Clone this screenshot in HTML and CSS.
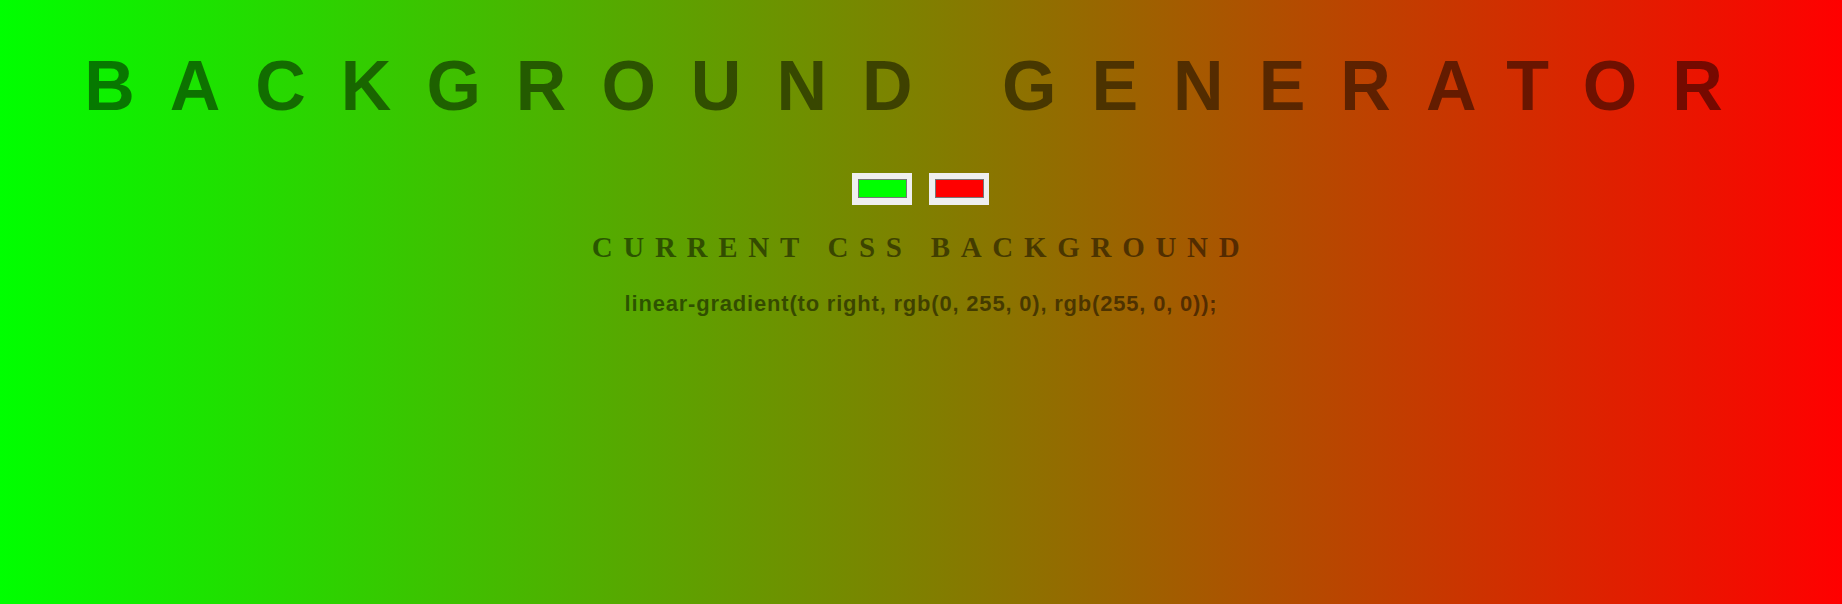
FILE: index.html
```html
<!DOCTYPE html>
<html lang="en">
<head>
<meta charset="utf-8">
<title>Background Generator</title>
<link rel="stylesheet" href="styles.css">
</head>
<body class="page">
  <h1 class="title">Background Generator</h1>
  <div class="pickers">
    <input class="picker" type="color" name="color1" value="#00ff00">
    <input class="picker" type="color" name="color2" value="#ff0000">
  </div>
  <h3 class="subtitle">Current CSS Background</h3>
  <h3 class="css-value">linear-gradient(to right, rgb(0, 255, 0), rgb(255, 0, 0));</h3>
</body>
</html>
```

FILE: styles.css
```css
html {
  height: 100%;
}

.page {
  margin: 0;
  min-height: 100vh;
  display: flex;
  flex-direction: column;
  align-items: stretch;
  text-align: center;
  color: rgba(0, 0, 0, 0.5);
  background: linear-gradient(to right, rgb(0, 255, 0), rgb(255, 0, 0));
}

.title {
  margin: 47px 0 0;
  font: 700 70px/78px "Liberation Sans", Arial, sans-serif;
  letter-spacing: 35px;
  text-transform: uppercase;
}

.pickers {
  margin-top: 48px;
  display: flex;
  justify-content: center;
  gap: 17px;
  padding-right: 2px;
}

.picker {
  -webkit-appearance: none;
  appearance: none;
  box-sizing: border-box;
  width: 60px;
  height: 32px;
  margin: 0;
  padding: 0;
  border: 0;
  background: #efefef;
  cursor: pointer;
}

.picker::-webkit-color-swatch-wrapper {
  padding: 6px 5px 7px 6px;
}

.picker::-webkit-color-swatch {
  border: 1px solid #777777;
  border-radius: 0;
}

.subtitle {
  margin: 26px 0 0;
  font: 700 29px/32px "Liberation Serif", "Times New Roman", serif;
  letter-spacing: 10.7px;
  text-transform: uppercase;
}

.css-value {
  margin: 29px 0 0;
  font: 700 22px/24px "Liberation Sans", Arial, sans-serif;
  letter-spacing: 0.8px;
}
```
